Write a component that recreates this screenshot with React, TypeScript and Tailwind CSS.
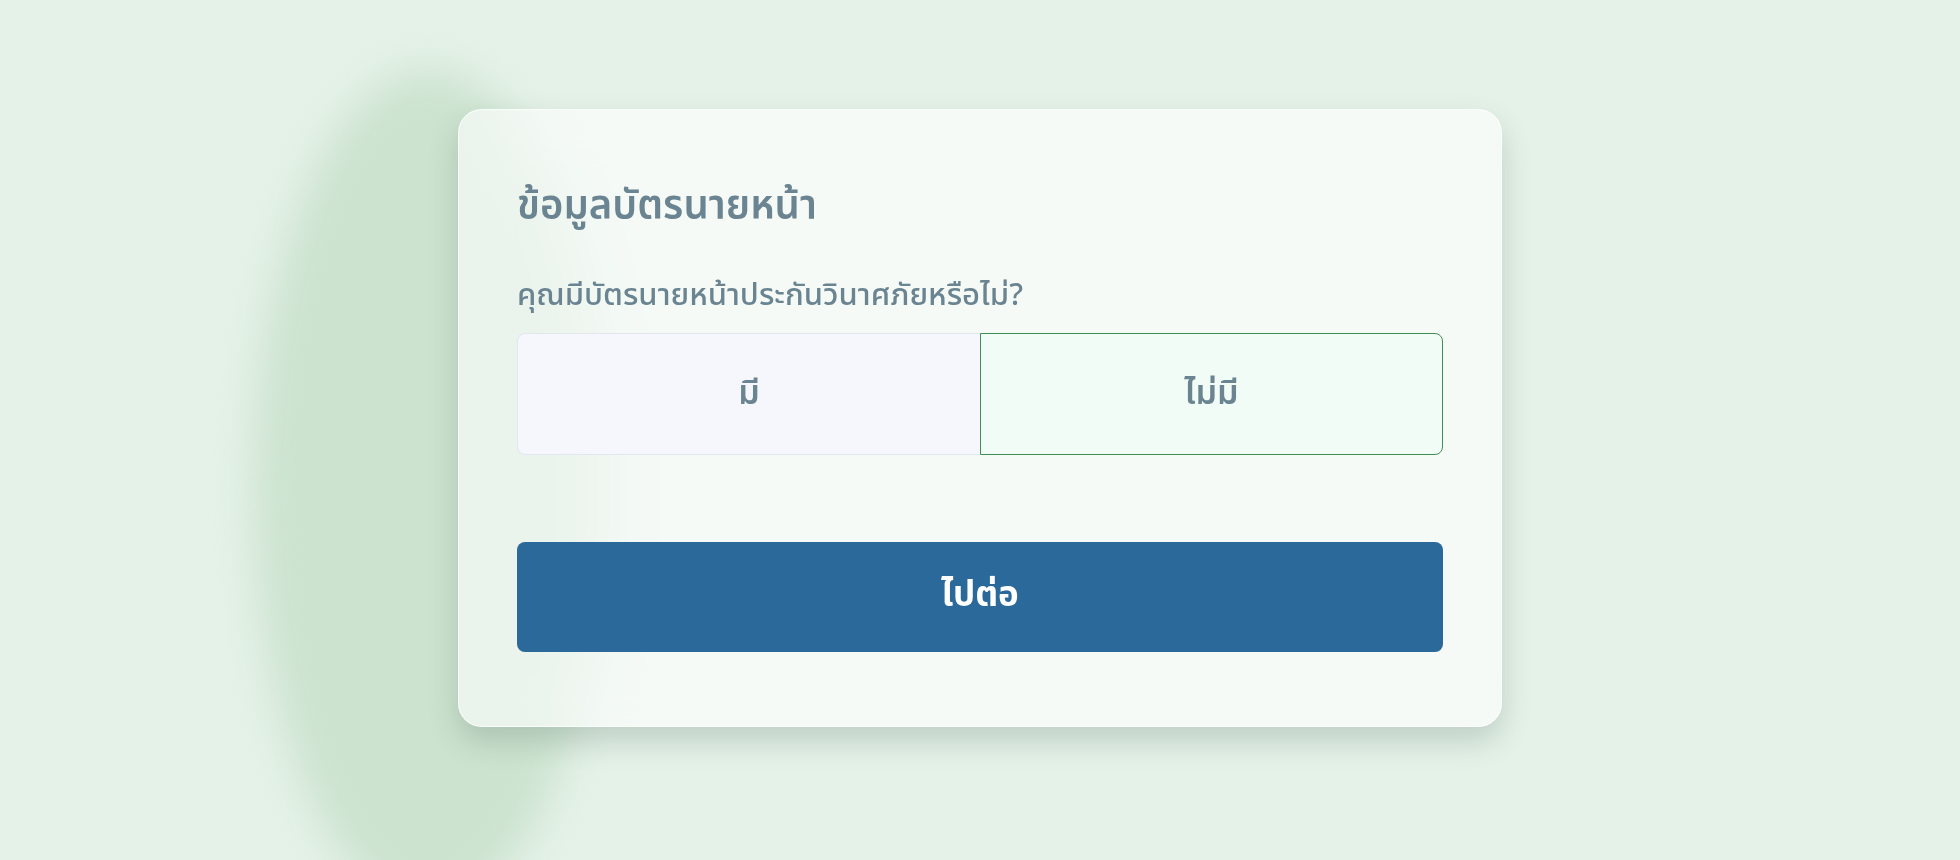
import { useState } from "react";

const App = () => {
  const [hasCard, setHasCard] = useState<boolean>(false);

  return (
    <div
      className="relative min-h-[860px] w-full overflow-hidden bg-[#e5f2e8] pt-[109px]"
      style={{ fontFamily: '"Noto Sans Thai", "Noto Sans", sans-serif' }}
    >
      {/* soft green blob behind the card */}
      <div className="pointer-events-none absolute left-[254px] top-[70px] h-[840px] w-[350px] rounded-[50%] bg-[#cce3cf] blur-[20px]" />

      <div className="relative mx-auto w-[1044px] rounded-3xl border border-white/70 bg-white/60 px-[58px] pb-[74px] pt-[67px] shadow-[0_14px_30px_rgba(40,70,60,0.2)] backdrop-blur-xl">
        <h1 className="text-[40px] font-semibold leading-[1.5] text-[#6a8491]">
          ข้อมูลบัตรนายหน้า
        </h1>
        <p className="mt-[36px] text-[31px] font-medium leading-[1.5] text-[#6a8491]">
          คุณมีบัตรนายหน้าประกันวินาศภัยหรือไม่?
        </p>

        <div className="mt-[13px] grid h-[122px] grid-cols-2">
          <button
            onClick={() => setHasCard(true)}
            className={
              hasCard
                ? "rounded-l-lg border border-r-0 border-[#3f8f55] bg-[#f2fcf6] text-[34px] font-semibold text-[#6a8491]"
                : "rounded-l-lg border border-r-0 border-[#e2e6ee] bg-[#f6f7fc] text-[34px] font-semibold text-[#6a8491]"
            }
          >
            มี
          </button>
          <button
            onClick={() => setHasCard(false)}
            className={
              !hasCard
                ? "rounded-r-lg border border-[#3f8f55] bg-[#f2fcf6] text-[34px] font-semibold text-[#6a8491]"
                : "rounded-r-lg border border-[#e2e6ee] bg-[#f6f7fc] text-[34px] font-semibold text-[#6a8491]"
            }
          >
            ไม่มี
          </button>
        </div>

        <button className="mt-[87px] h-[110px] w-full rounded-lg bg-[#2b699b] text-[35px] font-bold text-white">
          ไปต่อ
        </button>
      </div>
    </div>
  );
};

export default App;
